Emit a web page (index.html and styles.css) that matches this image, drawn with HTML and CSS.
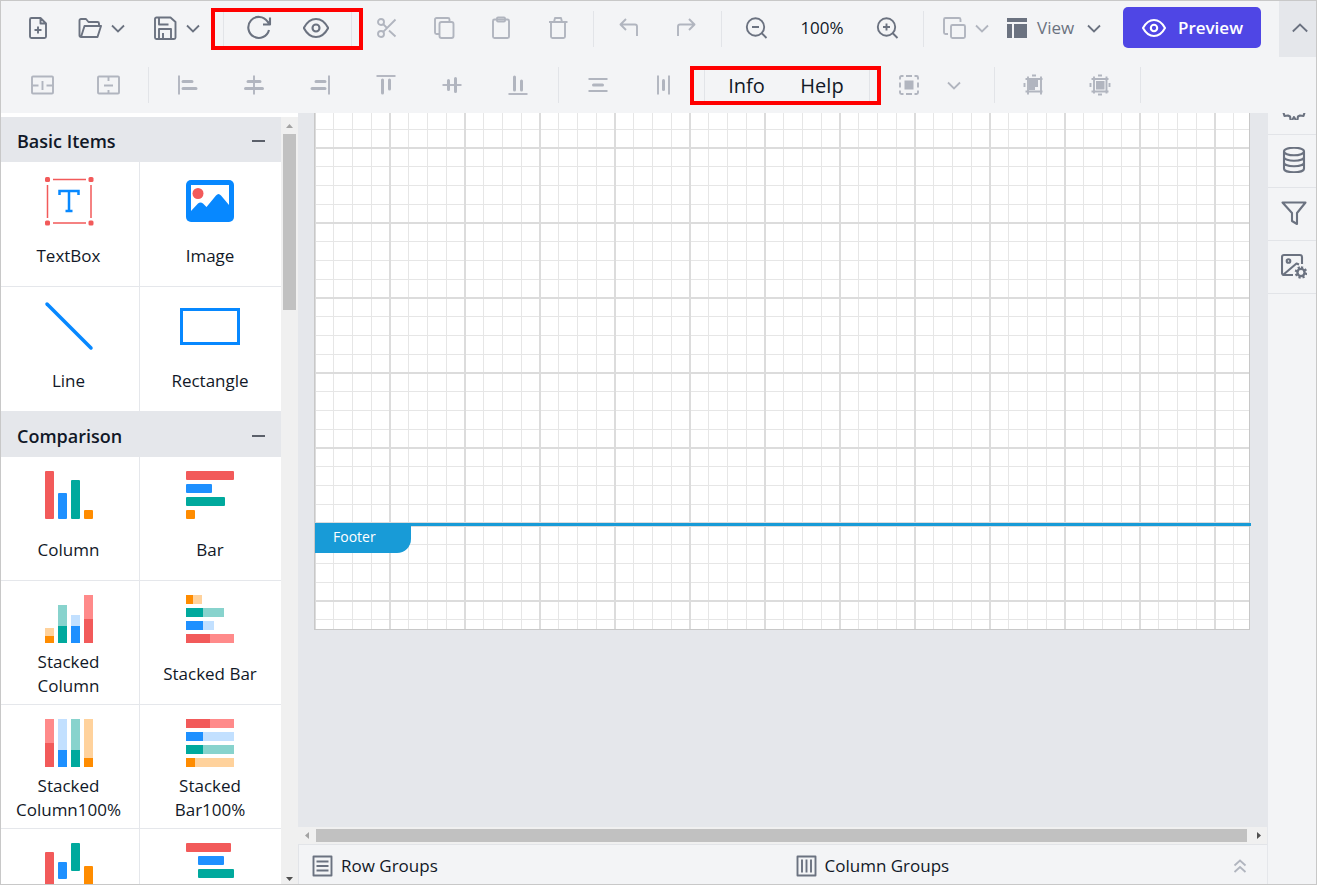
FILE: index.html
```html
<!DOCTYPE html>
<html lang="en">
<head>
<meta charset="utf-8">
<meta name="viewport" content="width=device-width, initial-scale=1">
<title>Report Designer</title>
<link rel="stylesheet" href="styles.css">
</head>
<body>
<svg class="defs" aria-hidden="true">
  <symbol id="down" viewBox="0 0 16 16"><path d="M2 5.500 8 11.500l6-6"/></symbol>
</svg>
<div class="app">
  <header class="toolbar">
    <div class="row first">
      <button class="tool" aria-label="New"><svg class="icon" viewBox="0 0 24 24"><path d="M14.500 2H5.500a1.500 1.500 0 0 0-1.500 1.500v17A1.500 1.500 0 0 0 5.500 22h13a1.500 1.500 0 0 0 1.500-1.500V7.500zM14.500 2v5.500H20M12 10.500v7M8.500 14h7"/></svg></button>
      <button class="split" aria-label="Open"><svg class="icon" viewBox="0 0 24 24"><path d="M3 21a1.500 1.500 0 0 1-1.500-1.500V4.500A1.500 1.500 0 0 1 3 3h5l2.500 3h9a1.500 1.500 0 0 1 1.500 1.500V10M3 21h16.500l3.500-11H6.500z"/></svg><svg class="chev"><use href="#down"/></svg></button>
      <button class="split" aria-label="Save"><svg class="icon" viewBox="0 0 24 24"><path d="M3.500 1.500h14L22.500 6v15.500a1.500 1.500 0 0 1-1.500 1.500H3.500A1.500 1.500 0 0 1 2 21.500V3a1.500 1.500 0 0 1 1.500-1.500zM6 2v6.500h9.500M6 23V13h12v10M10 17v6"/></svg><svg class="chev"><use href="#down"/></svg></button>
      <div class="marked marked-view">
        <span class="sep"></span>
        <button class="tool" aria-label="Refresh"><svg class="icon big" viewBox="0 0 26 26"><path d="M23 15A10.500 10.500 0 1 1 21.500 6.500L23.500 9M24 2.500V9.500H17"/></svg></button>
        <button class="tool" aria-label="View report"><svg class="icon big" viewBox="0 0 26 26"><path d="M.8 13C4 7 8.500 4 13 4s9 3 12.200 9c-3.200 6-7.700 9-12.200 9S4 19 .8 13z"/><circle cx="13" cy="13" r="3.500"/></svg></button>
        <span class="sep"></span>
      </div>
      <button class="tool off" aria-label="Cut"><svg class="icon" viewBox="0 0 24 24"><circle cx="6" cy="6" r="3"/><circle cx="6" cy="18" r="3"/><path d="M20.500 3.500 8.200 15.800M8.200 8.200l3.800 3.800M14 14.500l6.500 6"/></svg></button>
      <button class="tool off" aria-label="Copy"><svg class="icon" viewBox="0 0 24 24"><rect x="7.500" y="6" width="14" height="16" rx="2"/><path d="M7 18H4.500A1.500 1.500 0 0 1 3 16.500V3.500A1.500 1.500 0 0 1 4.500 2H16a1.500 1.500 0 0 1 1.500 1.500V6"/></svg></button>
      <button class="tool off" aria-label="Paste"><svg class="icon" viewBox="0 0 24 24"><rect x="4" y="3.500" width="16" height="18.500" rx="1.500"/><rect x="8" y="1.500" width="8" height="4" rx="1"/></svg></button>
      <button class="tool off" aria-label="Delete"><svg class="icon" viewBox="0 0 24 24"><path d="M3 6h18.500M5 6v14.500A1.500 1.500 0 0 0 6.500 22h11a1.500 1.500 0 0 0 1.500-1.500V6M8 6l1-4h6l1 4"/></svg></button>
      <span class="sep"></span>
      <button class="tool off" aria-label="Undo"><svg class="icon" viewBox="0 0 24 24"><path d="M9 3 3.500 8.500 9 14M3.500 8.500H18a2 2 0 0 1 2 2V20"/></svg></button>
      <button class="tool off" aria-label="Redo"><svg class="icon" viewBox="0 0 24 24"><path d="m15 3 5.500 5.500L15 14M20.500 8.500H6a2 2 0 0 0-2 2V20"/></svg></button>
      <span class="sep"></span>
      <button class="tool" aria-label="Zoom out"><svg class="icon" viewBox="0 0 24 24"><circle cx="10.500" cy="11" r="8.700"/><path d="m16.500 17 5 5M7 11h7"/></svg></button>
      <span class="zoom">100%</span>
      <button class="tool" aria-label="Zoom in"><svg class="icon" viewBox="0 0 24 24"><circle cx="10.500" cy="11" r="8.700"/><path d="m16.500 17 5 5M7 11h7M10.500 7.500v7"/></svg></button>
      <span class="sep"></span>
      <button class="split order off" aria-label="Order"><svg class="icon" viewBox="0 0 24 24"><rect x="9" y="9" width="14" height="13" rx="1.500"/><path d="M6 18H3.500A1.500 1.500 0 0 1 2 16.500v-13A1.500 1.500 0 0 1 3.500 2H17a1.500 1.500 0 0 1 1.500 1.500V6"/></svg><svg class="chev"><use href="#down"/></svg></button>
      <button class="view"><svg class="icon solid" viewBox="0 0 24 24"><path d="M2 2h20v4H2zM2 8h5v14H2zM9 8h13v14H9z"/></svg>View<svg class="chev"><use href="#down"/></svg></button>
      <button class="preview"><svg class="icon" viewBox="0 0 24 24"><path d="M1 12c3-5.500 7-8 11-8s8 2.500 11 8c-3 5.500-7 8-11 8s-8-2.500-11-8z"/><circle cx="12" cy="12" r="3.200"/></svg>Preview</button>
      <button class="collapse" aria-label="Collapse toolbar"><svg class="chev" viewBox="0 0 16 16"><path d="M.8 11.500 8 4.500l7.200 7"/></svg></button>
    </div>
    <div class="row second">
      <button class="tool off" aria-label="Merge cells"><svg class="icon" viewBox="0 0 24 24"><rect x="2" y="3.500" width="21" height="17" rx="1"/><path d="M12.500 8v9M2.500 12.500h6M16.500 12.500h6"/></svg></button>
      <button class="tool off" aria-label="Split cells"><svg class="icon" viewBox="0 0 24 24"><rect x="2" y="3.500" width="21" height="17" rx="1"/><path d="M8 12.500h9M12.500 4v4M12.500 17v4"/></svg></button>
      <span class="sep"></span>
      <button class="tool off" aria-label="Align left"><svg class="icon" viewBox="0 0 24 24"><path d="M3 2.500v19"/><path class="bold" d="M7 8.500h9M7 15.500h13"/></svg></button>
      <button class="tool off" aria-label="Align center"><svg class="icon" viewBox="0 0 24 24"><path d="M12 2.500v19"/><path class="bold" d="M6 8.500h12M3.500 15.500h17"/></svg></button>
      <button class="tool off" aria-label="Align right"><svg class="icon" viewBox="0 0 24 24"><path d="M21 2.500v19"/><path class="bold" d="M8 8.500h9M4 15.500h13"/></svg></button>
      <button class="tool off" aria-label="Align top"><svg class="icon" viewBox="0 0 24 24"><path d="M2.500 3h19"/><path class="bold" d="M8.500 7v13M15.500 7v9"/></svg></button>
      <button class="tool off" aria-label="Align middle"><svg class="icon" viewBox="0 0 24 24"><path d="M2.500 12h19"/><path class="bold" d="M8.500 7.500v9M15.500 5.500v13"/></svg></button>
      <button class="tool off" aria-label="Align bottom"><svg class="icon" viewBox="0 0 24 24"><path d="M2.500 21h19"/><path class="bold" d="M8.500 4v13M15.500 8v9"/></svg></button>
      <span class="sep"></span>
      <button class="tool off" aria-label="Space vertically"><svg class="icon" viewBox="0 0 24 24"><path d="M2.500 6h19M2.500 18h19"/><path class="bold" d="M7.500 12h9"/></svg></button>
      <button class="tool off" aria-label="Space horizontally"><svg class="icon" viewBox="0 0 24 24"><path d="M6 2.500v19M17 2.500v19"/><path class="bold" d="M11.500 7.500v9"/></svg></button>
      <div class="marked marked-text">
        <span class="sep"></span>
        <button class="text info">Info</button>
        <button class="text help">Help</button>
        <span class="sep"></span>
      </div>
      <button class="tool off" aria-label="Select"><svg class="icon" viewBox="0 0 24 24"><path d="M3 6.500V4.500A1.500 1.500 0 0 1 4.500 3h2M9 3h6M17.500 3h2A1.500 1.500 0 0 1 21 4.500v2M21 9.500v5M21 17.500v2a1.500 1.500 0 0 1-1.500 1.500h-2M15 21H9M6.500 21h-2A1.500 1.500 0 0 1 3 19.500v-2M3 14.500v-5"/><path class="fill" d="M7.500 7.500h9v9h-9z"/></svg></button>
      <button class="more off" aria-label="More selection options"><svg class="chev"><use href="#down"/></svg></button>
      <span class="sep"></span>
      <button class="tool off" aria-label="Group"><svg class="icon" viewBox="0 0 24 24"><path d="M3.500 6h17M6 3.500v18M19 3.500v18M3.500 18.500h17M10 2.500h4M2.500 10v4"/><path class="fill" d="M7 7h9v7h-3v3H7z"/></svg></button>
      <button class="tool off" aria-label="Ungroup"><svg class="icon" viewBox="0 0 24 24"><path d="M3.500 6h17M6 3.500v17M18.500 3.500v17M3.500 18.500h17M10 2.500h4M2.500 10v4M10 21.500h4M21.500 10v4"/><path class="fill" d="M8 8h8.500v8.500H8z"/></svg></button>
      <span class="sep"></span>
    </div>
  </header>

  <main class="workspace">
    <aside class="items">
      <div class="list">
        <h2>Basic Items <button class="fold" aria-label="Collapse Basic Items"></button></h2>
        <div class="cells">
          <button class="cell"><svg class="art" viewBox="0 0 48 48"><path d="M8 2.500h33M8 46h33M2.500 8v33M46 8v33" stroke="#f25a5a" stroke-width="1.500"/><rect width="5" height="5" rx="1.500" fill="#f25a5a"/><rect x="43.500" width="5" height="5" rx="1.500" fill="#f25a5a"/><rect y="43.500" width="5" height="5" rx="1.500" fill="#f25a5a"/><rect x="43.500" y="43.500" width="5" height="5" rx="1.500" fill="#f25a5a"/><path d="M14.500 18v-4h19v4M24 14v20M20.500 34h7" stroke="#0788ff" stroke-width="2.500" fill="none"/></svg><span>TextBox</span></button>
          <button class="cell"><svg class="art" viewBox="0 0 48 48"><rect y="3" width="48" height="42" rx="5" fill="#0788ff"/><path d="M5 8h38v20l-8-9.500q-2.500-3-5 0L20.500 30 17 26.500q-2.500-2-5 0L5 34z" fill="#fff"/><circle cx="12" cy="16.500" r="5.500" fill="#f25a5a"/></svg><span>Image</span></button>
          <button class="cell"><svg class="art" viewBox="0 0 48 48"><path d="m2 2 44 44" stroke="#0788ff" stroke-width="3.500" stroke-linecap="round"/></svg><span>Line</span></button>
          <button class="cell"><svg class="art wide" viewBox="0 0 60 48"><path d="M1.500 7.500h57v34h-57z" fill="none" stroke="#0788ff" stroke-width="3"/></svg><span>Rectangle</span></button>
        </div>
        <h2>Comparison <button class="fold" aria-label="Collapse Comparison"></button></h2>
        <div class="cells charts">
          <button class="cell"><svg class="art" viewBox="0 0 48 48"><rect width="9" height="48" rx="1" fill="#f25a5a"/><rect x="13" y="22" width="9" height="26" rx="1" fill="#1e90ff"/><rect x="26" y="9" width="9" height="39" rx="1" fill="#00a99d"/><rect x="39" y="39" width="9" height="9" rx="1" fill="#ff8c00"/></svg><span>Column</span></button>
          <button class="cell"><svg class="art" viewBox="0 0 48 48"><rect width="48" height="9" rx="1" fill="#f25a5a"/><rect y="13" width="26" height="9" rx="1" fill="#1e90ff"/><rect y="26" width="39" height="9" rx="1" fill="#00a99d"/><rect y="39" width="9" height="9" rx="1" fill="#ff8c00"/></svg><span>Bar</span></button>
          <button class="cell"><svg class="art" viewBox="0 0 48 48"><path fill="#ffd29c" d="M0 33h9v9H0z"/><path fill="#ff8c00" d="M0 41h9v7H0z"/><path fill="#88d3cd" d="M13 10h9v21h-9z"/><path fill="#00a99d" d="M13 31h9v17h-9z"/><path fill="#c2e0ff" d="M26 20h9v11h-9z"/><path fill="#1e90ff" d="M26 31h9v17h-9z"/><path fill="#ff8a8a" d="M39 0h9v24h-9z"/><path fill="#f25a5a" d="M39 24h9v24h-9z"/></svg><span>Stacked Column</span></button>
          <button class="cell"><svg class="art" viewBox="0 0 48 48"><path fill="#ffd29c" d="M7 0h9v9H7z"/><path fill="#ff8c00" d="M0 0h7v9H0z"/><path fill="#88d3cd" d="M17 13h21v9H17z"/><path fill="#00a99d" d="M0 13h17v9H0z"/><path fill="#c2e0ff" d="M17 26h11v9H17z"/><path fill="#1e90ff" d="M0 26h17v9H0z"/><path fill="#ff8a8a" d="M24 39h24v9H24z"/><path fill="#f25a5a" d="M0 39h24v9H0z"/></svg><span>Stacked Bar</span></button>
          <button class="cell"><svg class="art" viewBox="0 0 48 48"><path fill="#ff8a8a" d="M0 0h9v24H0z"/><path fill="#f25a5a" d="M0 24h9v24H0z"/><path fill="#c2e0ff" d="M13 0h9v31h-9z"/><path fill="#1e90ff" d="M13 31h9v17h-9z"/><path fill="#88d3cd" d="M26 0h9v31h-9z"/><path fill="#00a99d" d="M26 31h9v17h-9z"/><path fill="#ffd29c" d="M39 0h9v39h-9z"/><path fill="#ff8c00" d="M39 39h9v9h-9z"/></svg><span>Stacked Column100%</span></button>
          <button class="cell"><svg class="art" viewBox="0 0 48 48"><path fill="#ff8a8a" d="M24 0h24v9H24z"/><path fill="#f25a5a" d="M0 0h24v9H0z"/><path fill="#c2e0ff" d="M17 13h31v9H17z"/><path fill="#1e90ff" d="M0 13h17v9H0z"/><path fill="#88d3cd" d="M17 26h31v9H17z"/><path fill="#00a99d" d="M0 26h17v9H0z"/><path fill="#ffd29c" d="M9 39h39v9H9z"/><path fill="#ff8c00" d="M0 39h9v9H0z"/></svg><span>Stacked Bar100%</span></button>
          <button class="cell" aria-label="Range Column"><svg class="art" viewBox="0 0 48 48"><rect y="9" width="9" height="39" rx="1" fill="#f25a5a"/><rect x="13" y="19" width="9" height="17" rx="1" fill="#1e90ff"/><rect x="26" width="9" height="28" rx="1" fill="#00a99d"/><rect x="39" y="23" width="9" height="25" rx="1" fill="#ff8c00"/></svg></button>
          <button class="cell" aria-label="Range Bar"><svg class="art" viewBox="0 0 48 48"><rect width="45" height="9" rx="1" fill="#f25a5a"/><rect x="12" y="13" width="26" height="9" rx="1" fill="#1e90ff"/><rect x="12" y="26" width="36" height="9" rx="1" fill="#00a99d"/></svg></button>
        </div>
      </div>
      <div class="vbar" aria-hidden="true"><svg viewBox="0 0 17 17"><path fill="#a3a3a3" d="m5 11 3.500-4 3.500 4z"/></svg><i></i><svg viewBox="0 0 17 17"><path fill="#505050" d="m5 10 3.500 4 3.500-4z"/></svg></div>
    </aside>

    <section class="center">
      <div class="surface">
        <div class="paper">
          <div class="grid body-grid"></div>
          <div class="footer-line"><span class="footer-tab">Footer</span></div>
          <div class="grid footer-grid"></div>
        </div>
      </div>
      <div class="hbar" aria-hidden="true"><svg viewBox="0 0 17 17"><path fill="#a3a3a3" d="M10 5 6 8.500l4 3.500z"/></svg><i></i><svg viewBox="0 0 17 17"><path fill="#505050" d="m7 5 4 3.500L7 12z"/></svg></div>
      <div class="groups">
        <div class="group"><svg class="icon" viewBox="0 0 24 24"><path d="M2.500 2.500h18v19h-18zM5.500 7.500h12M5.500 12h12M5.500 16.500h12"/></svg>Row Groups</div>
        <div class="group"><svg class="icon" viewBox="0 0 24 24"><path d="M2.500 2.500h18v19h-18zM7 5.500v13M11.500 5.500v13M16 5.500v13"/></svg>Column Groups
          <button class="expand off" aria-label="Expand groups"><svg class="chev" viewBox="0 0 16 16"><path d="m2.500 7.500 5.500-5 5.500 5M2.500 14 8 9l5.500 5"/></svg></button></div>
      </div>
    </section>

    <nav class="side">
      <button aria-label="Properties"><svg class="icon big" viewBox="0 0 26 26"><circle cx="13" cy="13" r="4"/><path d="M10.500 1.500h5l.7 3 2.300 1.300 3-1L24 9l-2.300 2.500v3L24 17l-1.500 5-3.500-.5-2 1-.5 3q-1 1.500-2 0l-1.500-2.500-1.500 2.500q-1 1.500-2 0l-.5-3-2-1-3.500.5L2 17l2.300-2.500v-3L2 9l2.500-4.200 3 1L9.800 4.500z"/></svg></button>
      <button aria-label="Data"><svg class="icon big" viewBox="0 0 26 26"><ellipse cx="13" cy="4.500" rx="10" ry="3.800"/><path d="M3 4.500v17c0 5 20 5 20 0v-17M3 10c0 5 20 5 20 0M3 15.500c0 5 20 5 20 0"/></svg></button>
      <button aria-label="Parameters"><svg class="icon big" viewBox="0 0 26 26"><path d="M1.500 2.500h23L16 13v11l-5-3v-8z"/></svg></button>
      <button aria-label="Image manager"><svg class="icon big" viewBox="0 0 26 26"><path d="M12 22H3a2 2 0 0 1-2-2V4a2 2 0 0 1 2-2h16a2 2 0 0 1 2 2v7M2.500 21.500 15.500 10.500l2.500 1"/><circle cx="7.500" cy="8" r="1.800"/><circle cx="20" cy="19.500" r="3.600" stroke-width="2.400"/><path stroke-width="2.400" stroke-dasharray="2.100 1.900" d="M20 14.400a5.100 5.100 0 1 1 0 10.200 5.100 5.100 0 1 1 0-10.200"/></svg></button>
    </nav>
  </main>
</div>
</body>
</html>
```

FILE: styles.css
```css
* { box-sizing: border-box; }

body {
  margin: 0;
  font-family: "Open Sans", "Noto Sans", sans-serif;
  font-size: 17px;
  line-height: 24px;
  color: #111827;
}

.defs { position: absolute; width: 0; height: 0; }

.app {
  display: flex;
  flex-direction: column;
  height: 100vh;
  border: 1px solid #c8c8c8;
  background: #f3f4f6;
  overflow: hidden;
}

button {
  display: flex;
  align-items: center;
  flex: none;
  margin: 0;
  padding: 0;
  border: 0;
  background: none;
  font: inherit;
  color: #6b7280;
}

svg { display: block; flex: none; }

.icon {
  width: 24px;
  height: 24px;
  fill: none;
  stroke: currentColor;
  stroke-width: 1.9;
  stroke-linejoin: round;
}
.icon.big { width: 26px; height: 26px; stroke-width: 2.1; }
.icon.solid, .icon .fill { fill: currentColor; stroke: none; }
.icon .bold { stroke-width: 3; stroke-linecap: round; }

.chev {
  width: 16px;
  height: 16px;
  fill: none;
  stroke: currentColor;
  stroke-width: 1.8;
}

.off { color: #b1b5bf; }

/* Toolbar */
.toolbar { position: relative; z-index: 1; flex: none; background: #f3f4f6; }
.row { display: flex; align-items: center; height: 56px; padding-left: 8px; }
.row.first > button, .zoom { padding-bottom: 3px; }
.tool { justify-content: center; width: 57px; height: 40px; }
.second .tool { width: 66px; }
.split { gap: 8px; width: 75px; height: 40px; padding-left: 12px; }
.split.order { width: 65px; }
.sep {
  flex: none;
  width: 1px;
  height: 36px;
  margin: 0 6px 0 7px;
  background: #e2e4e8;
}
.zoom { width: 74px; text-align: center; }
.view { gap: 8px; height: 40px; padding-left: 10px; }
.view .chev { margin-left: 4px; }
.more { width: 45px; height: 40px; padding-left: 4px; }

.marked { position: relative; display: flex; align-items: center; }
.marked::after {
  content: "";
  position: absolute;
  border: 4px solid #ff0000;
  pointer-events: none;
}
.marked-view::after { inset: -1px -5px -1px -5px; }
.marked-text::after { inset: -1px -5px -2px -7px; }
.marked-view .tool { padding-bottom: 2px; }

.text { justify-content: center; height: 36px; padding-top: 1px; font-size: 20px; color: #111827; }
.info { width: 71px; }
.help { width: 80px; }

.row.first > .preview {
  gap: 12px;
  height: 41px;
  margin: 0 0 3px auto;
  padding: 0 18px 0 19px;
  border-radius: 5px;
  background: #4f46e5;
  color: #fff;
  font-weight: 600;
}
.preview .icon { stroke-width: 2.1; }
.collapse {
  justify-content: center;
  align-self: stretch;
  width: 37px;
  margin-left: 18px;
  padding-left: 4px;
  background: #e5e7eb;
}

/* Workspace */
.workspace { display: flex; flex: 1; min-height: 0; }

.items { display: flex; flex: none; width: 297px; padding-top: 4px; background: #fff; }
.list { flex: 1; overflow: hidden; }
.list h2 {
  display: flex;
  align-items: center;
  justify-content: space-between;
  height: 45px;
  margin: 0;
  padding: 2px 16px 0;
  background: #e5e7eb;
  font-size: 18px;
  font-weight: 600;
}
.fold { width: 13px; height: 16px; }
.fold::before { content: ""; width: 13px; height: 2px; background: #5b606a; }

.cells { display: grid; grid-template-columns: 139px 1fr; grid-auto-rows: 125px; }
.charts { grid-auto-rows: 124px; }
.cell {
  flex-direction: column;
  padding: 15px 9px 0 8px;
  border-bottom: 1px solid #e5e7eb;
  color: #111827;
}
.charts .cell { padding-top: 14px; }
.cell:nth-child(odd) { padding-right: 11px; border-right: 1px solid #e5e7eb; }
.cell span {
  display: flex;
  align-items: center;
  height: 50px;
  margin-top: 6px;
  text-align: center;
}
.art { width: 48px; height: 48px; overflow: visible; }
.art.wide { width: 60px; }

.vbar { display: flex; flex-direction: column; flex: none; width: 17px; background: #f0f0f0; }
.vbar svg, .hbar svg { width: 17px; height: 17px; }
.vbar i { height: 176px; margin: 0 2px auto; background: #c1c1c1; }

.center { display: flex; flex: 1; flex-direction: column; min-width: 0; background: #e5e7eb; border-right: 1px solid #e5e7eb; }
.surface { flex: 1; min-height: 0; padding: 0 17px 0 16px; overflow: hidden; }
.paper { border: 1px solid #c8c8c8; border-top: 0; background: #fff; }
.grid {
  background-image:
    linear-gradient(90deg, #dcdcdc 2px, transparent 2px),
    linear-gradient(#dcdcdc 2px, transparent 2px),
    linear-gradient(90deg, transparent 19px, #e6e6e6 19px 20px, transparent 20px 38px, #e6e6e6 38px 39px, transparent 39px 57px, #e6e6e6 57px 58px, transparent 58px),
    linear-gradient(transparent 19px, #e6e6e6 19px 20px, transparent 20px 38px, #e6e6e6 38px 39px, transparent 39px 57px, #e6e6e6 57px 58px, transparent 58px);
  background-size: 75px 75px;
}
.body-grid { height: 410px; background-position: -1px 34px; }
.footer-grid { height: 103px; background-position: -1px -1px; }
.footer-line { position: relative; height: 3px; margin-right: -2px; background: #189bd7; }
.footer-tab {
  position: absolute;
  top: 0;
  left: 0;
  width: 96px;
  height: 30px;
  padding-left: 18px;
  border-bottom-right-radius: 14px;
  background: #189bd7;
  color: #fff;
  font-size: 14px;
  line-height: 28px;
}

.hbar { display: flex; align-items: center; flex: none; height: 17px; padding-left: 1px; background: #f0f0f0; }
.hbar i { flex: 1; height: 13px; margin-right: 3px; background: #c1c1c1; }

.groups { display: flex; flex: none; height: 40px; border-top: 1px solid #e2e4e8; border-left: 1px solid #e2e4e8; background: #f3f4f6; }
.group { display: flex; align-items: center; flex: 1; gap: 6px; padding: 2px 19px 0 12px; }
.group + .group { padding-left: 11px; }
.group > .icon { color: #6b7280; }
.expand { margin-left: auto; }

.side { flex: none; width: 48px; margin-top: -31px; }
.side button {
  justify-content: center;
  width: 100%;
  height: 53px;
  padding: 0 0 3px 4px;
  border-bottom: 1px solid #e2e4e8;
}
```
